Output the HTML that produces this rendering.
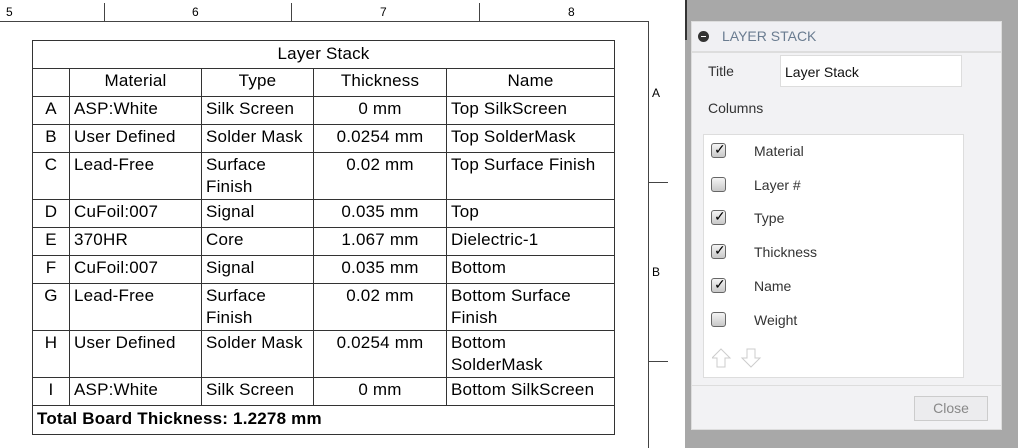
<!DOCTYPE html>
<html><head><style>
body{margin:0;width:1018px;height:448px;overflow:hidden;background:#fff;font-family:"Liberation Sans",Arial,sans-serif;position:relative}
.a{position:absolute}
table{position:absolute;left:32px;top:40px;border-collapse:collapse;font-size:17px;color:#000;table-layout:fixed;width:582px}
td{border:1px solid #333;padding:0 4px;vertical-align:top;line-height:22px;padding-top:1px;box-sizing:border-box;white-space:nowrap;letter-spacing:0.2px}
.c{text-align:center}
.lab{font-size:12px;color:#000}
.cb{position:absolute;left:711px;width:15px;height:15px;border:1px solid #666;border-radius:3px;background:linear-gradient(#f4f4f4,#c8c8c8);box-sizing:border-box}
.cl{position:absolute;left:754px;font-size:14px;color:#333}
</style></head><body>
<div class="a" style="left:0;top:21px;width:648px;height:1px;background:#444"></div>
<div class="a" style="left:648px;top:21px;width:1px;height:427px;background:#444"></div>
<div class="a" style="left:104px;top:3px;width:1px;height:18px;background:#444"></div>
<div class="a" style="left:291px;top:3px;width:1px;height:18px;background:#444"></div>
<div class="a" style="left:479px;top:3px;width:1px;height:18px;background:#444"></div>
<div class="a" style="left:648px;top:182px;width:20px;height:1px;background:#444"></div>
<div class="a" style="left:648px;top:361px;width:20px;height:1px;background:#444"></div>
<div class="a lab" style="left:6px;top:5px">5</div>
<div class="a lab" style="left:192px;top:5px">6</div>
<div class="a lab" style="left:380px;top:5px">7</div>
<div class="a lab" style="left:568px;top:5px">8</div>
<div class="a lab" style="left:652px;top:86px">A</div>
<div class="a lab" style="left:652px;top:265px">B</div>
<table>
<colgroup><col style="width:37px"><col style="width:132px"><col style="width:112px"><col style="width:133px"><col style="width:168px"></colgroup>
<tr style="height:28px"><td colspan="5" class="c" style="padding-top:2px">Layer Stack</td></tr>
<tr style="height:28px"><td></td><td class="c">Material</td><td class="c">Type</td><td class="c">Thickness</td><td class="c">Name</td></tr>
<tr style="height:28px"><td class="c">A</td><td>ASP:White</td><td>Silk Screen</td><td class="c">0 mm</td><td>Top SilkScreen</td></tr>
<tr style="height:28px"><td class="c">B</td><td>User Defined</td><td>Solder Mask</td><td class="c">0.0254 mm</td><td>Top SolderMask</td></tr>
<tr style="height:47px"><td class="c">C</td><td>Lead-Free</td><td>Surface<br>Finish</td><td class="c">0.02 mm</td><td>Top Surface Finish</td></tr>
<tr style="height:28px"><td class="c">D</td><td>CuFoil:007</td><td>Signal</td><td class="c">0.035 mm</td><td>Top</td></tr>
<tr style="height:28px"><td class="c">E</td><td>370HR</td><td>Core</td><td class="c">1.067 mm</td><td>Dielectric-1</td></tr>
<tr style="height:28px"><td class="c">F</td><td>CuFoil:007</td><td>Signal</td><td class="c">0.035 mm</td><td>Bottom</td></tr>
<tr style="height:47px"><td class="c">G</td><td>Lead-Free</td><td>Surface<br>Finish</td><td class="c">0.02 mm</td><td>Bottom Surface<br>Finish</td></tr>
<tr style="height:47px"><td class="c">H</td><td>User Defined</td><td>Solder Mask</td><td class="c">0.0254 mm</td><td>Bottom<br>SolderMask</td></tr>
<tr style="height:28px"><td class="c">I</td><td>ASP:White</td><td>Silk Screen</td><td class="c">0 mm</td><td>Bottom SilkScreen</td></tr>
<tr style="height:29px"><td colspan="5" style="font-weight:bold;padding-top:2px">Total Board Thickness: 1.2278 mm</td></tr>
</table>

<div class="a" style="left:685px;top:0;width:333px;height:448px;background:#a8a8a8"></div>
<div class="a" style="left:685px;top:0;width:2px;height:40px;background:#333"></div>
<div class="a" style="left:691px;top:21px;width:311px;height:409px;background:#f2f2f4;border:1px solid #ddd;box-sizing:border-box"></div>
<div class="a" style="left:692px;top:22px;width:309px;height:29px;background:#f0f0f3;border-bottom:2px solid #ddd"></div>
<div class="a" style="left:698px;top:31px;width:11px;height:11px;border-radius:50%;background:#333"></div>
<div class="a" style="left:701px;top:36px;width:5px;height:1px;background:#fff"></div>
<div class="a" style="left:722px;top:28px;font-size:14px;color:#6a7c90">LAYER STACK</div>
<div class="a" style="left:708px;top:63px;font-size:14px;color:#333">Title</div>
<div class="a" style="left:780px;top:55px;width:182px;height:32px;background:#fff;border:1px solid #ddd;box-sizing:border-box;font-size:14px;color:#111;padding:8px 0 0 4px">Layer Stack</div>
<div class="a" style="left:708px;top:100px;font-size:14px;color:#333">Columns</div>
<div class="a" style="left:703px;top:134px;width:261px;height:244px;background:#fff;border:1px solid #ddd;box-sizing:border-box"></div>
<div class="cb" style="top:143px"></div><div class="a" style="left:714px;top:141px;font-size:14px">✓</div><div class="cl" style="top:143px">Material</div>
<div class="cb" style="top:177px"></div><div class="cl" style="top:177px">Layer #</div>
<div class="cb" style="top:210px"></div><div class="a" style="left:714px;top:208px;font-size:14px">✓</div><div class="cl" style="top:210px">Type</div>
<div class="cb" style="top:244px"></div><div class="a" style="left:714px;top:242px;font-size:14px">✓</div><div class="cl" style="top:244px">Thickness</div>
<div class="cb" style="top:278px"></div><div class="a" style="left:714px;top:276px;font-size:14px">✓</div><div class="cl" style="top:278px">Name</div>
<div class="cb" style="top:312px"></div><div class="cl" style="top:312px">Weight</div>
<svg class="a" style="left:712px;top:348px" width="50" height="20"><path d="M9 1 L18 10 L13 10 L13 19 L5 19 L5 10 L0 10 Z" fill="#fff" stroke="#ccc"/><path d="M39 19 L48 10 L43 10 L43 1 L35 1 L35 10 L30 10 Z" fill="#fff" stroke="#ccc"/></svg>
<div class="a" style="left:692px;top:385px;width:309px;height:1px;background:#ddd"></div>
<div class="a" style="left:914px;top:396px;width:74px;height:25px;background:#ececee;border:1px solid #ccc;box-sizing:border-box;text-align:center;font-size:14px;color:#888;line-height:23px">Close</div>
</body></html>
